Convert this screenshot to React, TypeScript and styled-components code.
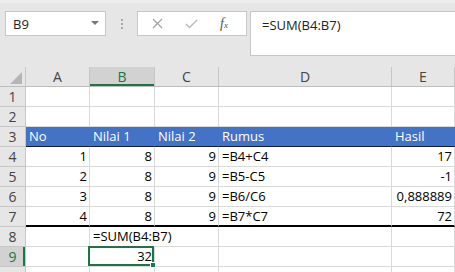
import * as React from 'react';
import styled, { createGlobalStyle } from 'styled-components';

const GlobalStyle = createGlobalStyle`
  html, body { margin: 0; padding: 0; background: #ffffff; }
  body { width: 455px; height: 272px; overflow: hidden; }
  * { box-sizing: border-box; }
`;

const Wrapper = styled.div`
  width: 455px;
  height: 272px;
  overflow: hidden;
  display: flex;
  flex-direction: column;
  font-family: "Open Sans", "Noto Sans", sans-serif;
`;

const Toolbar = styled.div`
  height: 67px;
  flex-shrink: 0;
  display: flex;
  align-items: flex-start;
  padding: 11px 0 0 5px;
  background: linear-gradient(#eeeeee 0 3px, #e6e6e6 3px);
`;

const NameBox = styled.div`
  width: 101px;
  height: 25px;
  background: #ffffff;
  border: 1px solid #c6c6c6;
  display: flex;
  align-items: center;
  justify-content: space-between;
  padding: 0 6px 0 7px;
  font-size: 13px;
  color: #222;
`;

const Grip = styled.div`
  width: 31px;
  height: 25px;
  display: flex;
  flex-direction: column;
  align-items: center;
  justify-content: center;
  gap: 2px;
  > i {
    width: 2px;
    height: 2px;
    background: #a8a8a8;
  }
`;

const FxButtons = styled.div`
  width: 110px;
  height: 25px;
  background: #ffffff;
  border: 1px solid #c6c6c6;
  display: flex;
  align-items: center;
  padding-left: 14px;
  margin-right: 3px;
  > svg { flex-shrink: 0; }
  > .ok { margin-left: 22px; }
`;

const FxLabel = styled.span`
  margin-left: 22px;
  font-family: "Liberation Serif", serif;
  font-style: italic;
  font-size: 14px;
  color: #555;
  > sub { font-size: 9px; vertical-align: baseline; }
`;

const FormulaInput = styled.div`
  flex: 1;
  height: 45px;
  background: #ffffff;
  border: 1px solid #c6c6c6;
  border-right: none;
  padding: 5px 11px;
  font-size: 13px;
  line-height: 17px;
  color: #222;
`;

const Sheet = styled.div`
  display: grid;
  grid-template-columns: 26px 64px 65px 64px 173px 63px;
  grid-auto-rows: 20px;
`;

const Corner = styled.div`
  background: #e6e6e6;
  border-right: 1px solid #c6c6c6;
  border-bottom: 1px solid #bdbdbd;
  position: relative;
  display: flex;
  align-items: flex-end;
  justify-content: flex-end;
  padding: 0 3px 2px 0;
`;

const ColHead = styled.div<{ $active?: boolean }>`
  background: ${p => (p.$active ? '#d2d2d2' : '#e6e6e6')};
  color: ${p => (p.$active ? '#217346' : '#444')};
  border-right: 1px solid #c6c6c6;
  border-bottom: 1px solid #bdbdbd;
  box-shadow: ${p => (p.$active ? 'inset 0 -2px 0 #217346' : 'none')};
  font-size: 14px;
  line-height: 19px;
  text-align: center;
`;

const RowHead = styled.div<{ $active?: boolean }>`
  background: ${p => (p.$active ? '#d2d2d2' : '#e6e6e6')};
  color: ${p => (p.$active ? '#217346' : '#444')};
  border-right: 1px solid #c6c6c6;
  border-bottom: 1px solid #c6c6c6;
  box-shadow: ${p => (p.$active ? 'inset -2px 0 0 #217346' : 'none')};
  font-size: 14px;
  line-height: 19px;
  text-align: center;
`;

type Edge = 'grid' | 'thin' | 'thick';

const Cell = styled.div<{
  $right?: boolean;
  $fill?: boolean;
  $edge?: Edge;
  $spill?: boolean;
  $selected?: boolean;
}>`
  position: relative;
  padding: 0 2px 0 3px;
  font-size: 13px;
  line-height: ${p => (p.$edge === 'thick' ? '18px' : '19px')};
  white-space: nowrap;
  text-align: ${p => (p.$right ? 'right' : 'left')};
  color: ${p => (p.$fill ? '#ffffff' : '#000000')};
  background: ${p => (p.$fill ? '#4472c4' : '#ffffff')};
  border-right: 1px solid
    ${p => (p.$fill ? '#4472c4' : p.$spill ? '#ffffff' : '#d9d9d9')};
  border-bottom: ${p =>
    p.$edge === 'thick'
      ? '2px solid #000000'
      : p.$edge === 'thin'
      ? '1px solid #1a1a1a'
      : '1px solid #d9d9d9'};
  overflow: ${p => (p.$spill || p.$selected ? 'visible' : 'hidden')};
  z-index: ${p => (p.$spill || p.$selected ? 1 : 0)};
`;

const Selection = styled.span`
  position: absolute;
  top: -1px;
  left: -2px;
  right: 0;
  bottom: 0;
  border: 2px solid #217346;
  pointer-events: none;
  > i {
    position: absolute;
    right: -4px;
    bottom: -4px;
    width: 6px;
    height: 6px;
    background: #217346;
    border: 1px solid #ffffff;
  }
`;

type CellData = string | number;

interface RowData {
  n: number;
  cells: CellData[];
  fill?: boolean;
  edge?: Edge;
}

const rows: RowData[] = [
  { n: 1, cells: ['', '', '', '', ''] },
  { n: 2, cells: ['', '', '', '', ''] },
  { n: 3, cells: ['No', 'Nilai 1', 'Nilai 2', 'Rumus', 'Hasil'], fill: true, edge: 'thin' },
  { n: 4, cells: [1, 8, 9, '=B4+C4', 17] },
  { n: 5, cells: [2, 8, 9, '=B5-C5', -1] },
  { n: 6, cells: [3, 8, 9, '=B6/C6', '0,888889'] },
  { n: 7, cells: [4, 8, 9, '=B7*C7', 72], edge: 'thick' },
  { n: 8, cells: ['', '=SUM(B4:B7)', '', '', ''] },
  { n: 9, cells: ['', 32, '', '', ''] },
  { n: 10, cells: ['', '', '', '', ''] },
];

const columns = ['A', 'B', 'C', 'D', 'E'];

function isNumeric(v: CellData) {
  return typeof v === 'number' || /^-?[\d,]+$/.test(v);
}

export default function App() {
  return (
    <Wrapper>
      <GlobalStyle />
      <Toolbar>
        <NameBox>
          <span>B9</span>
          <svg width="8" height="5" viewBox="0 0 8 5">
            <path d="M0 0 L8 0 L4 4 Z" fill="#777" />
          </svg>
        </NameBox>
        <Grip>
          <i />
          <i />
          <i />
        </Grip>
        <FxButtons>
          <svg width="11" height="11" viewBox="0 0 11 11">
            <path d="M1 1 L10 10 M10 1 L1 10" stroke="#a4a4a4" strokeWidth="1.3" />
          </svg>
          <svg className="ok" width="13" height="10" viewBox="0 0 13 10">
            <path d="M1 5 L4.5 8.5 L12 1" stroke="#b8b8b8" strokeWidth="1.4" fill="none" />
          </svg>
          <FxLabel>
            f<sub>x</sub>
          </FxLabel>
        </FxButtons>
        <FormulaInput>=SUM(B4:B7)</FormulaInput>
      </Toolbar>
      <Sheet>
        <Corner>
          <svg width="12" height="12" viewBox="0 0 12 12">
            <path d="M12 0 L12 12 L0 12 Z" fill="#b5b5b5" />
          </svg>
        </Corner>
        {columns.map(c => (
          <ColHead key={c} $active={c === 'B'}>
            {c}
          </ColHead>
        ))}
        {rows.map(r => (
          <React.Fragment key={r.n}>
            <RowHead $active={r.n === 9}>{r.n}</RowHead>
            {r.cells.map((v, i) => {
              const selected = r.n === 9 && i === 1;
              const spill = r.n === 8 && i === 1;
              return (
                <Cell
                  key={i}
                  $right={!r.fill && isNumeric(v)}
                  $fill={r.fill}
                  $edge={r.edge ?? 'grid'}
                  $spill={spill}
                  $selected={selected}
                >
                  {v}
                  {selected && (
                    <Selection>
                      <i />
                    </Selection>
                  )}
                </Cell>
              );
            })}
          </React.Fragment>
        ))}
      </Sheet>
    </Wrapper>
  );
}
